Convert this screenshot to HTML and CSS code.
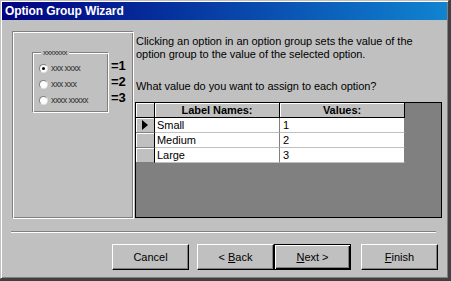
FILE: index.html
```html
<!DOCTYPE html>
<html lang="en">
<head>
    <meta charset="UTF-8">
    <title>Option Group Wizard</title>
    <link rel="stylesheet" href="styles.css">
</head>
<body>
    <div class="window">
        <div class="titlebar">Option Group Wizard</div>
        <div class="wizard">
            <div class="content">
                <div class="preview">
                    <div class="sample">
                        <div class="group">
                            <span class="caption">xxxxxxx</span>
                            <div class="opt"><span class="radio checked"></span><span class="hatch">xxx xxxx</span></div>
                            <div class="opt"><span class="radio"></span><span class="hatch">xxx xxx</span></div>
                            <div class="opt"><span class="radio"></span><span class="hatch">xxxx xxxxx</span></div>
                        </div>
                        <div class="values">
                            <div>=1</div>
                            <div>=2</div>
                            <div>=3</div>
                        </div>
                    </div>
                </div>
                <div class="main">
                    <p class="intro">Clicking an option in an option group sets the value of the option group to the value of the selected option.</p>
                    <p class="question">What value do you want to assign to each option?</p>
                    <div class="datasheet">
                        <div class="grid">
                            <div class="sel head"></div>
                            <div class="hd">Label Names:</div>
                            <div class="hd">Values:</div>

                            <div class="sel"><span class="arrow"></span></div>
                            <div class="cell">Small</div>
                            <div class="cell val">1</div>

                            <div class="sel"></div>
                            <div class="cell">Medium</div>
                            <div class="cell val">2</div>

                            <div class="sel"></div>
                            <div class="cell">Large</div>
                            <div class="cell val">3</div>
                        </div>
                    </div>
                </div>
            </div>
            <div class="rule"></div>
            <div class="buttons">
                <button class="btn cancel">Cancel</button>
                <button class="btn">&lt; <u>B</u>ack</button>
                <button class="btn default"><u>N</u>ext &gt;</button>
                <button class="btn"><u>F</u>inish</button>
            </div>
        </div>
    </div>
</body>
</html>
```

FILE: styles.css
```css
* {
    box-sizing: border-box;
}

html {
    background: #404040;
}

body {
    margin: 0;
    font-family: "Liberation Sans", Arial, sans-serif;
    font-size: 11px;
    letter-spacing: -0.05px;
    color: #000;
}

.window {
    width: 449px;
    height: 279px;
    background: #c0c0c0;
    border: 1px solid;
    border-color: #c0c0c0 #404040 #404040 #c0c0c0;
    box-shadow: inset 1px 1px 0 #fff, inset -1px -1px 0 #808080;
    padding: 1px;
}

.titlebar {
    height: 18px;
    background: linear-gradient(to right, #000080, #1084d0);
    color: #fff;
    font-weight: bold;
    font-size: 12px;
    letter-spacing: -0.1px;
    line-height: 18px;
    padding-left: 3px;
}

.wizard {
    padding: 11px 0 0 10px;
}

.content {
    display: flex;
    gap: 1px;
}

/* left preview */
.preview {
    width: 122px;
    height: 188px;
    border: 1px solid;
    border-color: #808080 #fff #fff #808080;
    box-shadow: inset 1px 1px 0 #fff, inset -1px -1px 0 #808080;
    padding: 20px 0 0 19px;
}

.sample {
    display: flex;
    align-items: flex-start;
}

.group {
    position: relative;
    width: 77px;
    height: 61px;
    border: 1px solid;
    border-color: #808080 #fff #fff #808080;
    box-shadow: inset 1px 1px 0 #fff, inset -1px -1px 0 #808080;
    padding: 7px 0 0 6px;
}

.caption {
    position: absolute;
    top: -5px;
    left: 8px;
    padding: 0 2px;
    background: #c0c0c0;
    font-size: 8px;
    letter-spacing: -0.6px;
    line-height: 9px;
    color: #303030;
}

.opt {
    display: flex;
    align-items: center;
    height: 16px;
    gap: 3px;
}

.radio {
    position: relative;
    width: 9px;
    height: 9px;
    border-radius: 50%;
    background: #fff;
    border: 1px solid;
    border-color: #808080 #dfdfdf #dfdfdf #808080;
}

.radio.checked::after {
    content: "";
    position: absolute;
    left: 2px;
    top: 2px;
    width: 3px;
    height: 3px;
    border-radius: 50%;
    background: #000;
}

.hatch {
    font-size: 9px;
    letter-spacing: -0.6px;
    line-height: 9px;
    color: #303030;
}

.values {
    margin-left: 2px;
    padding-top: 6px;
    font-size: 13px;
    font-weight: bold;
    line-height: 16px;
}

/* right side */
.main {
    width: 307px;
    padding-top: 4px;
}

.main p {
    margin: 0;
    padding-left: 1px;
    line-height: 13px;
}

.intro {
    margin-bottom: 19px !important;
}

.question {
    margin-bottom: 9px !important;
}

.datasheet {
    height: 116px;
    background: #808080;
    border: 1px solid #000;
}

.grid {
    display: grid;
    grid-template-columns: 19px 125px 125px;
    grid-auto-rows: 15px;
    width: 269px;
}

.sel {
    background: #c0c0c0;
    border-right: 1px solid #000;
    border-bottom: 1px solid #808080;
    box-shadow: inset 1px 1px 0 #fff;
    display: flex;
    align-items: center;
    padding-left: 6px;
}

.sel.head {
    border-bottom-color: #000;
}

.arrow {
    width: 0;
    height: 0;
    border-left: 6px solid #000;
    border-top: 5px solid transparent;
    border-bottom: 5px solid transparent;
}

.hd {
    background: #c0c0c0;
    border-right: 1px solid #000;
    border-bottom: 1px solid #000;
    box-shadow: inset 1px 1px 0 #fff;
    font-weight: bold;
    text-align: center;
    line-height: 14px;
}

.cell {
    background: #fff;
    border-right: 1px solid #808080;
    border-bottom: 1px solid #c0c0c0;
    padding-left: 2px;
    line-height: 14px;
}

.cell.val {
    padding-left: 3px;
}

/* bottom */
.rule {
    margin: 12px 0 0 -1px;
    width: 425px;
    border-top: 1px solid #808080;
    border-bottom: 1px solid #fff;
}

.buttons {
    display: flex;
    margin-top: 11px;
    padding-left: 100px;
}

.btn {
    width: 77px;
    height: 26px;
    background: #c0c0c0;
    border: 1px solid;
    border-color: #fff #000 #000 #fff;
    box-shadow: inset -1px -1px 0 #808080;
    font-family: "Liberation Sans", Arial, sans-serif;
    font-size: 11px;
    color: #000;
    padding: 0;
}

.btn.cancel {
    margin-right: 8px;
}

.btn.default {
    border-color: #000;
    box-shadow: inset 1px 1px 0 #fff, inset -1px -1px 0 #000, inset -2px -2px 0 #808080;
    margin-right: 10px;
}
```
